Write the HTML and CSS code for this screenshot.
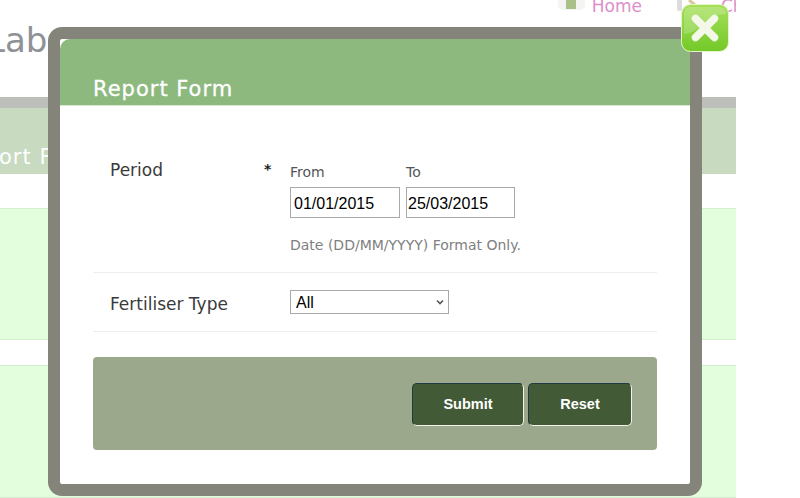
FILE: index.html
```html
<!DOCTYPE html>
<html lang="en">
<head>
    <meta charset="UTF-8">
    <meta name="viewport" content="width=device-width, initial-scale=1.0">
    <title>Report Form</title>
    <link rel="stylesheet" href="styles.css">
</head>
<body>

    <div class="page">
        <div class="top">
            <div class="title">Lab</div>
            <div class="nav">
                <span class="nav-icon"><span class="nav-door"></span></span>
                <span class="nav-link">Home</span>
                <svg class="nav-icon-two" width="30" height="12" viewBox="0 0 30 12">
                    <rect x="0" y="-3" width="5" height="14" rx="2" fill="#dcdcde"/>
                    <path d="M12 0 L24 10" stroke="#d8c79a" stroke-width="3"/>
                </svg>
                <span class="nav-link nav-link-two">Change</span>
            </div>
        </div>
        <div class="band">ort Form</div>
        <div class="mint-row"></div>
        <div class="mint-row second"></div>
    </div>

    <div class="modal">
        <div class="modal-head">Report Form</div>
        <div class="modal-body">
            <div class="form-row period-row">
                <div class="label">Period</div>
                <div class="req">*</div>
                <div class="field">
                    <div class="dates">
                        <div class="date">
                            <span>From</span>
                            <input class="text-input" type="text" value="01/01/2015">
                        </div>
                        <div class="date">
                            <span>To</span>
                            <input class="text-input to-input" type="text" value="25/03/2015">
                        </div>
                    </div>
                    <div class="hint">Date (DD/MM/YYYY) Format Only.</div>
                </div>
            </div>
            <div class="form-row type-row">
                <div class="label">Fertiliser Type</div>
                <div class="req"></div>
                <div class="field">
                    <div class="select-wrap">
                        <select class="select-input">
                            <option>All</option>
                        </select>
                        <svg class="select-arrow" width="8" height="6" viewBox="0 0 8 6">
                            <path d="M1 1.5 L4 4.5 L7 1.5" fill="none" stroke="#555" stroke-width="1.6"/>
                        </svg>
                    </div>
                </div>
            </div>
            <div class="actions">
                <button class="btn btn-submit">Submit</button>
                <button class="btn btn-reset">Reset</button>
            </div>
        </div>
    </div>

    <div class="close">
        <svg width="48" height="48" viewBox="0 0 48 48">
            <defs>
                <linearGradient id="closeFill" x1="0" y1="0" x2="0" y2="1">
                    <stop offset="0" stop-color="#a6e05a"/>
                    <stop offset="1" stop-color="#73c928"/>
                </linearGradient>
            </defs>
            <rect x="0.5" y="0.5" width="47" height="47" rx="9" fill="url(#closeFill)" stroke="#e4f5c8"/>
            <path d="M3 10 Q3 3 10 3 L38 3 Q45 3 45 10 Q30 10 20 22 Q10 30 3 30 Z" fill="#fff" opacity="0.2"/>
            <path d="M14.5 14.5 L33.5 33.5 M33.5 14.5 L14.5 33.5" stroke="#f3f8e8" stroke-width="7.5" stroke-linecap="round"/>
        </svg>
    </div>

</body>
</html>
```

FILE: styles.css
```css
html, body {
    height: 100%;
}
body {
    margin: 0;
    background-color: #fff;
    font-family: "DejaVu Sans", sans-serif;
    overflow: hidden;
}
.page {
    width: 736px;
    height: 498px;
    overflow: hidden;
}
.top {
    display: flex;
    justify-content: space-between;
    height: 97px;
    border-bottom: 11px solid #bdbfba;
}
.title {
    margin: 21px 0 0 -14px;
    font-size: 34px;
    line-height: 38px;
    color: #8e9196;
}
.nav {
    display: flex;
    flex: none;
    align-items: flex-start;
    height: 14px;
    margin-right: -50px;
    font-size: 17px;
    line-height: 12px;
    color: #dc8fc8;
    overflow: hidden;
}
.nav-icon {
    display: flex;
    justify-content: center;
    width: 27px;
    height: 10px;
    background: #f4f4f2;
    border-radius: 0 0 5px 5px;
}
.nav-door {
    width: 10px;
    height: 9px;
    background: #a9c088;
}
.nav-icon-two {
    flex: none;
    margin-left: 35px;
}
.nav-link {
    margin-left: 7px;
    white-space: nowrap;
}
.nav-link-two {
    margin-left: 14px;
}
.band {
    height: 66px;
    font-size: 21px;
    letter-spacing: 1px;
    line-height: 98px;
    text-indent: -1px;
    color: #fff;
    background: #c8dabf;
    overflow: hidden;
}
.mint-row {
    height: 130px;
    margin-top: 34px;
    background: #e3fedd;
    border-top: 1px solid #d6eed0;
    border-bottom: 1px solid #d6eed0;
}
.mint-row.second {
    height: 131px;
    margin-top: 25px;
}
.modal {
    position: absolute;
    left: 48px;
    top: 27px;
    width: 630px;
    height: 445px;
    border: 12px solid #85847a;
    border-radius: 14px;
    background: #fff;
}
.modal-head {
    height: 67px;
    box-sizing: border-box;
    padding: 36px 0 0 33px;
    background: #8db97f;
    border-radius: 10px 0 0 0;
    border-bottom: 1px solid #d9e6d2;
    color: #fff;
    font-size: 21px;
    line-height: 28px;
    letter-spacing: 1px;
    -webkit-text-stroke: 0.3px #fff;
}
.modal-body {
    padding: 0 33px;
}
.form-row {
    display: flex;
    border-bottom: 1px solid #eeeeee;
}
.period-row {
    height: 167px;
    box-sizing: border-box;
    padding-top: 53px;
}
.type-row {
    height: 59px;
    box-sizing: border-box;
    padding-top: 17px;
}
.label {
    width: 154px;
    padding-left: 17px;
    font-size: 17px;
    line-height: 22px;
    color: #3a3a3a;
}
.type-row .label {
    padding-top: 3px;
}
.req {
    width: 26px;
    font-size: 14px;
    font-weight: bold;
    line-height: 20px;
    color: #222;
}
.dates {
    display: flex;
    gap: 6px;
}
.date {
    display: flex;
    flex-direction: column;
    font-size: 14px;
    line-height: 20px;
    color: #555;
}
.date span {
    margin-top: 3px;
    margin-bottom: 5px;
}
.text-input {
    width: 110px;
    height: 31px;
    box-sizing: border-box;
    padding: 3px 3px 1px;
    border: 1px solid #a9a9a9;
    font-family: "Liberation Sans", sans-serif;
    font-size: 16px;
    color: #000;
    background: #fff;
}
.to-input {
    width: 109px;
    padding-left: 1px;
}
.hint {
    margin-top: 17px;
    font-size: 14px;
    line-height: 20px;
    color: #808080;
}
.select-wrap {
    position: relative;
    width: 159px;
}
.select-input {
    display: block;
    width: 159px;
    height: 24px;
    padding: 0 0 0 5px;
    border: 1px solid #a9a9a9;
    border-radius: 0;
    appearance: none;
    font-family: "Liberation Sans", sans-serif;
    font-size: 16px;
    color: #000;
    background: #fff;
}
.select-arrow {
    position: absolute;
    right: 5px;
    top: 9px;
}
.actions {
    display: flex;
    justify-content: flex-end;
    align-items: center;
    gap: 4px;
    height: 93px;
    box-sizing: border-box;
    margin-top: 25px;
    padding: 2px 25px 0 0;
    background: #9ca88c;
    border-radius: 4px;
}
.btn {
    height: 43px;
    box-sizing: border-box;
    padding: 0 0 2px;
    border: 1px solid #1f3a44;
    border-right-color: #f0f4ec;
    border-bottom-color: #f0f4ec;
    border-radius: 5px;
    background: #425a36;
    color: #fff;
    font-family: "Liberation Sans", sans-serif;
    font-size: 14.5px;
    font-weight: bold;
}
.btn-submit {
    width: 112px;
}
.btn-reset {
    width: 104px;
}
.close {
    position: absolute;
    left: 681px;
    top: 4px;
    width: 48px;
    height: 48px;
}
```
